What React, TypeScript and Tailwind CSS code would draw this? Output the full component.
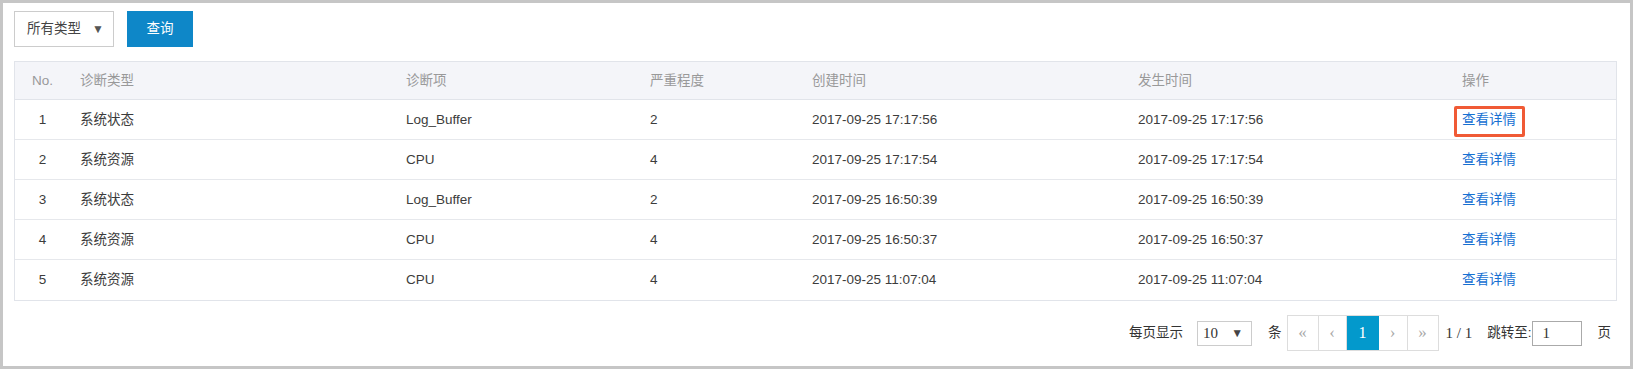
import React from 'react';

const rows = [
  { no: 1, type: '系统状态', item: 'Log_Buffer', level: 2, created: '2017-09-25 17:17:56', happened: '2017-09-25 17:17:56' },
  { no: 2, type: '系统资源', item: 'CPU', level: 4, created: '2017-09-25 17:17:54', happened: '2017-09-25 17:17:54' },
  { no: 3, type: '系统状态', item: 'Log_Buffer', level: 2, created: '2017-09-25 16:50:39', happened: '2017-09-25 16:50:39' },
  { no: 4, type: '系统资源', item: 'CPU', level: 4, created: '2017-09-25 16:50:37', happened: '2017-09-25 16:50:37' },
  { no: 5, type: '系统资源', item: 'CPU', level: 4, created: '2017-09-25 11:07:04', happened: '2017-09-25 11:07:04' },
];

const cols = 'grid grid-cols-[55px_326px_244px_162px_326px_324px_1fr]';

const App: React.FC = () => {
  return (
    <div className="h-[369px] w-full border-[3px] border-[#c6c6c6] bg-white pl-[11px] pr-[13px] pt-[8px] font-['Liberation_Sans','Noto_Sans_CJK_SC',sans-serif] text-[13.5px] text-[#3c3c3c]">
      {/* toolbar */}
      <div className="flex items-center gap-[13px]">
        <div className="flex h-[36px] w-[100px] items-center justify-between border border-[#ccc] pl-[12px] pr-[9px] text-[#444]">
          <span>所有类型</span>
          <span className="text-[12px] text-[#555]">▼</span>
        </div>
        <button className="h-[36px] w-[66px] bg-[#0e87c8] text-white">查询</button>
      </div>

      {/* table */}
      <div className="mt-[14px] border border-[#e1e4ea]">
        <div className={`${cols} h-[38px] items-center border-b border-[#e1e4ea] bg-[#f4f5f9] pt-[1px] text-[#999]`}>
          <div className="text-center">No.</div>
          <div className="pl-[10px]">诊断类型</div>
          <div className="pl-[10px]">诊断项</div>
          <div className="pl-[10px]">严重程度</div>
          <div className="pl-[10px]">创建时间</div>
          <div className="pl-[10px]">发生时间</div>
          <div className="pl-[10px]">操作</div>
        </div>
        {rows.map((r, i) => (
          <div
            key={r.no}
            className={`${cols} h-[40px] items-center pt-[1px] ${i < rows.length - 1 ? 'border-b border-[#e6e8ec]' : ''}`}
          >
            <div className="text-center">{r.no}</div>
            <div className="pl-[10px]">{r.type}</div>
            <div className="pl-[10px]">{r.item}</div>
            <div className="pl-[10px]">{r.level}</div>
            <div className="pl-[10px]">{r.created}</div>
            <div className="pl-[10px]">{r.happened}</div>
            <div className="pl-[10px]">
              <span className="relative inline-block leading-[20px] text-[#1670d2]">
                查看详情
                {i === 0 && (
                  <span className="absolute left-[-8px] right-[-9px] top-[-4px] bottom-[-7px] rounded-[2px] border-[3px] border-[#f05a35]" />
                )}
              </span>
            </div>
          </div>
        ))}
      </div>

      {/* pagination */}
      <div className="mt-[14px] flex items-center justify-end text-[#333]">
        <span>每页显示</span>
        <div className="ml-[14px] flex h-[25px] w-[55px] items-center justify-between border border-[#ccc] pl-[5px] pr-[8px] font-['Liberation_Serif',serif] text-[15px]">
          <span>10</span>
          <span className="text-[12px] text-[#444]">▼</span>
        </div>
        <span className="ml-[16px]">条</span>
        <div className="ml-[5px] flex h-[36px] border border-[#ddd] font-['Liberation_Serif',serif]">
          <div className="flex w-[31px] items-center justify-center border-r border-[#ddd] text-[17px] text-[#aaa]">«</div>
          <div className="flex w-[28px] items-center justify-center border-r border-[#ddd] text-[17px] text-[#aaa]">‹</div>
          <div className="flex w-[32px] items-center justify-center bg-[#0399cc] text-[16px] text-white">1</div>
          <div className="flex w-[29px] items-center justify-center border-r border-[#ddd] text-[17px] text-[#aaa]">›</div>
          <div className="flex w-[30px] items-center justify-center text-[17px] text-[#aaa]">»</div>
        </div>
        <span className="ml-[7px] font-['Liberation_Serif',serif] text-[15px]">1 / 1</span>
        <span className="ml-[15px]">跳转至:</span>
        <div className="flex h-[25px] w-[50px] items-center border border-[#aaa] pl-[10px] font-['Liberation_Serif',serif] text-[15px]">
          1
        </div>
        <span className="ml-[16px] mr-[6px]">页</span>
      </div>
    </div>
  );
};

export default App;
